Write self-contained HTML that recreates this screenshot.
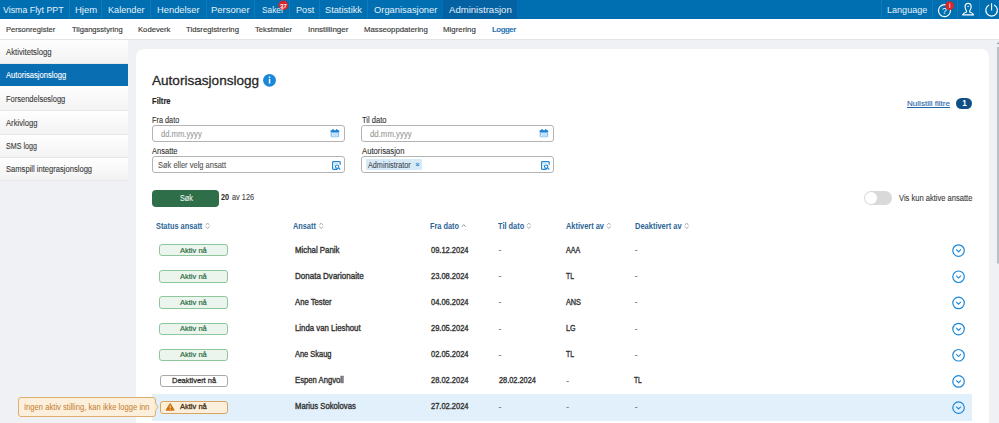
<!DOCTYPE html><html><head><meta charset="utf-8"><style>
html,body{margin:0;padding:0;width:999px;height:423px;overflow:hidden;background:#eff1f5;font-family:"Liberation Sans",sans-serif;}
.b{position:absolute;box-sizing:border-box;}
.t{position:absolute;white-space:nowrap;line-height:normal;}
svg{position:absolute;overflow:visible;}
</style></head><body>
<div class="b" style="left:0px;top:0px;width:999px;height:19px;background:#006fb1"></div>
<div class="b" style="left:443px;top:0px;width:74px;height:19px;background:#0462a2"></div>
<div class="b" style="left:69px;top:0px;width:1px;height:19px;background:#137ab9"></div>
<div class="b" style="left:101px;top:0px;width:1px;height:19px;background:#137ab9"></div>
<div class="b" style="left:150px;top:0px;width:1px;height:19px;background:#137ab9"></div>
<div class="b" style="left:206px;top:0px;width:1px;height:19px;background:#137ab9"></div>
<div class="b" style="left:254px;top:0px;width:1px;height:19px;background:#137ab9"></div>
<div class="b" style="left:289px;top:0px;width:1px;height:19px;background:#137ab9"></div>
<div class="b" style="left:319px;top:0px;width:1px;height:19px;background:#137ab9"></div>
<div class="b" style="left:367px;top:0px;width:1px;height:19px;background:#137ab9"></div>
<div class="b" style="left:881px;top:0px;width:1px;height:19px;background:#137ab9"></div>
<div class="b" style="left:932px;top:0px;width:1px;height:19px;background:#137ab9"></div>
<div class="b" style="left:956.5px;top:0px;width:1.0px;height:19px;background:#137ab9"></div>
<div class="b" style="left:978.5px;top:0px;width:1.0px;height:19px;background:#137ab9"></div>
<div class="b" style="left:0px;top:19px;width:999px;height:20px;background:#fff"></div>
<div class="b" style="left:0px;top:38.5px;width:999px;height:1.0px;background:#e2e4e7"></div>
<div class="b" style="left:0px;top:40px;width:128px;height:141px;background:#f6f6f6"></div>
<div class="b" style="left:0px;top:40px;width:128px;height:24px;background:linear-gradient(#fefefe,#f3f3f3);border-bottom:1px solid #e6e6e6"></div>
<div class="b" style="left:0px;top:64px;width:128px;height:22px;background:#0a6eb3"></div>
<div class="b" style="left:0px;top:86px;width:128px;height:25px;background:linear-gradient(#fefefe,#f3f3f3);border-bottom:1px solid #e6e6e6"></div>
<div class="b" style="left:0px;top:111px;width:128px;height:23.5px;background:linear-gradient(#fefefe,#f3f3f3);border-bottom:1px solid #e6e6e6"></div>
<div class="b" style="left:0px;top:134.5px;width:128px;height:23.5px;background:linear-gradient(#fefefe,#f3f3f3);border-bottom:1px solid #e6e6e6"></div>
<div class="b" style="left:0px;top:158px;width:128px;height:23px;background:linear-gradient(#fefefe,#f3f3f3);border-bottom:1px solid #e6e6e6"></div>
<div class="b" style="left:136px;top:49px;width:853px;height:391px;background:#fff;border-radius:8px"></div>
<div class="b" style="left:956px;top:98px;width:16px;height:11px;background:#0f4f86;border-radius:6px"></div>
<div class="b" style="left:152px;top:125px;width:192.5px;height:16.599999999999994px;border:1px solid #b3b3b3;border-radius:3px;background:#fff"></div>
<div class="b" style="left:361.3px;top:125px;width:192.40000000000003px;height:16.599999999999994px;border:1px solid #b3b3b3;border-radius:3px;background:#fff"></div>
<div class="b" style="left:152px;top:156.2px;width:192.5px;height:16.400000000000006px;border:1px solid #b3b3b3;border-radius:3px;background:#fff"></div>
<div class="b" style="left:361.3px;top:156.2px;width:192.40000000000003px;height:16.400000000000006px;border:1px solid #b3b3b3;border-radius:3px;background:#fff"></div>
<div class="b" style="left:365.5px;top:159.4px;width:56.30000000000001px;height:10.400000000000006px;background:#d6eaf8;border-radius:1px"></div>
<div class="b" style="left:152.4px;top:190px;width:66.6px;height:16.5px;background:#2e6e48;border-radius:4px"></div>
<div class="b" style="left:863.8px;top:191.2px;width:28.300000000000068px;height:13.600000000000023px;background:#d9d9d9;border-radius:7px"></div>
<div class="b" style="left:864.8px;top:192.2px;width:11.800000000000068px;height:11.600000000000023px;background:#fff;border-radius:50%"></div>
<div class="b" style="left:152.3px;top:394.2px;width:819.9000000000001px;height:26.600000000000023px;background:#e1f0fa"></div>
<div class="b" style="left:159.4px;top:244.0px;width:68.5px;height:12.399999999999977px;background:#ebf5ed;border:1px solid #8fc79c;border-radius:3px"></div>
<div class="b" style="left:159.4px;top:270.18px;width:68.5px;height:12.399999999999977px;background:#ebf5ed;border:1px solid #8fc79c;border-radius:3px"></div>
<div class="b" style="left:159.4px;top:296.36px;width:68.5px;height:12.399999999999977px;background:#ebf5ed;border:1px solid #8fc79c;border-radius:3px"></div>
<div class="b" style="left:159.4px;top:322.54px;width:68.5px;height:12.399999999999977px;background:#ebf5ed;border:1px solid #8fc79c;border-radius:3px"></div>
<div class="b" style="left:159.4px;top:348.71999999999997px;width:68.5px;height:12.399999999999977px;background:#ebf5ed;border:1px solid #8fc79c;border-radius:3px"></div>
<div class="b" style="left:159.5px;top:375.1px;width:68.1px;height:12.0px;background:#fff;border:1px solid #a9a9a9;border-radius:3px"></div>
<div class="b" style="left:159.5px;top:401.28px;width:68.1px;height:12.300000000000011px;background:#fcefdc;border:1px solid #d9a463;border-radius:3px"></div>
<div class="b" style="left:17.7px;top:397.2px;width:138.0px;height:19.600000000000023px;background:#fcf0dc;border:1px solid #deae6e;border-radius:3px"></div>
<svg style="left:0;top:0" width="999" height="423" viewBox="0 0 999 423">
<circle cx="944.5" cy="10.6" r="6.0" fill="none" stroke="#fff" stroke-width="1.15"/>
<text x="944.3" y="14" font-family="Liberation Sans" font-size="8.6" fill="#fff" text-anchor="middle">?</text>
<circle cx="949.6" cy="5.6" r="4.4" fill="#d9262c"/>
<rect x="949.3" y="3.4" width="0.9" height="4.6" fill="#f4d8e0"/>
<path d="M968.1,3.3 C966,3.3 964.9,4.8 965.1,7 C965.2,8.6 965.8,10 966.5,10.9 L966.5,11.9 C965,12.6 963,13.2 962.6,14.8 L973.6,14.8 C973.2,13.2 971.2,12.6 969.7,11.9 L969.7,10.9 C970.4,10 971,8.6 971.1,7 C971.3,4.8 970.2,3.3 968.1,3.3 Z" fill="none" stroke="#fff" stroke-width="1.15" stroke-linejoin="round"/>
<rect x="967.2" y="5.9" width="1.9" height="0.8" fill="#fff"/>
<path d="M989.15,5.04 A5.8,5.8 0 1 0 994.05,5.04" fill="none" stroke="#fff" stroke-width="1.15"/>
<line x1="991.6" y1="3.3" x2="991.6" y2="10.5" stroke="#fff" stroke-width="1.1"/>
<circle cx="283.3" cy="5.4" r="4.8" fill="#d9262c"/>
<text x="283.4" y="7.5" font-family="Liberation Sans" font-size="5.8" fill="#fff" stroke="#fff" stroke-width="0.15" text-anchor="middle" letter-spacing="-0.2">37</text>
<circle cx="269.5" cy="80.3" r="6.4" fill="#1a87d8"/>
<rect x="268.8" y="76.6" width="1.5" height="1.5" fill="#fff"/><rect x="268.8" y="79" width="1.5" height="4.6" fill="#fff"/>
<rect x="330.6" y="130.29999999999998" width="8.6" height="7" rx="1.2" fill="#8fc6ef"/>
<rect x="330.6" y="130.29999999999998" width="8.6" height="2" rx="0.8" fill="#1f80d2"/>
<rect x="332.40000000000003" y="129.1" width="1.4" height="2" rx="0.5" fill="#1f80d2"/><rect x="336.0" y="129.1" width="1.4" height="2" rx="0.5" fill="#1f80d2"/>
<rect x="332.0" y="132.9" width="5.8" height="3.6" fill="#d8ecfa"/>
<line x1="333.90000000000003" y1="132.9" x2="333.90000000000003" y2="136.5" stroke="#8fc6ef" stroke-width="0.6"/><line x1="335.90000000000003" y1="132.9" x2="335.90000000000003" y2="136.5" stroke="#8fc6ef" stroke-width="0.6"/>
<rect x="539.6" y="130.29999999999998" width="8.6" height="7" rx="1.2" fill="#8fc6ef"/>
<rect x="539.6" y="130.29999999999998" width="8.6" height="2" rx="0.8" fill="#1f80d2"/>
<rect x="541.4" y="129.1" width="1.4" height="2" rx="0.5" fill="#1f80d2"/><rect x="545.0" y="129.1" width="1.4" height="2" rx="0.5" fill="#1f80d2"/>
<rect x="541.0" y="132.9" width="5.8" height="3.6" fill="#d8ecfa"/>
<line x1="542.9" y1="132.9" x2="542.9" y2="136.5" stroke="#8fc6ef" stroke-width="0.6"/><line x1="544.9" y1="132.9" x2="544.9" y2="136.5" stroke="#8fc6ef" stroke-width="0.6"/>
<path d="M337.6,169.29999999999998 L333.4,169.29999999999998 Q332.6,169.29999999999998 332.6,168.5 L332.6,162.5 Q332.6,161.7 333.4,161.7 L339.4,161.7 Q340.2,161.7 340.2,162.5 L340.2,164.7" fill="none" stroke="#2186d6" stroke-width="1.2"/>
<rect x="334.0" y="163.29999999999998" width="3.5" height="0.8" fill="#a9d3f3"/><rect x="334.0" y="165.1" width="2.4" height="0.8" fill="#a9d3f3"/>
<circle cx="337.2" cy="166.7" r="1.7" fill="#fff" stroke="#2186d6" stroke-width="1.1"/>
<line x1="338.4" y1="167.9" x2="340.2" y2="169.5" stroke="#2186d6" stroke-width="1.1"/>
<path d="M546.6,169.29999999999998 L542.4,169.29999999999998 Q541.6,169.29999999999998 541.6,168.5 L541.6,162.5 Q541.6,161.7 542.4,161.7 L548.4,161.7 Q549.2,161.7 549.2,162.5 L549.2,164.7" fill="none" stroke="#2186d6" stroke-width="1.2"/>
<rect x="543.0" y="163.29999999999998" width="3.5" height="0.8" fill="#a9d3f3"/><rect x="543.0" y="165.1" width="2.4" height="0.8" fill="#a9d3f3"/>
<circle cx="546.2" cy="166.7" r="1.7" fill="#fff" stroke="#2186d6" stroke-width="1.1"/>
<line x1="547.4" y1="167.9" x2="549.2" y2="169.5" stroke="#2186d6" stroke-width="1.1"/>
<path d="M205.79999999999998,225.20000000000002 L207.6,223.0 L209.4,225.20000000000002 M205.79999999999998,226.4 L207.6,228.60000000000002 L209.4,226.4" fill="none" stroke="#9a9a9a" stroke-width="0.8"/>
<path d="M319.4,225.20000000000002 L321.2,223.0 L323.0,225.20000000000002 M319.4,226.4 L321.2,228.60000000000002 L323.0,226.4" fill="none" stroke="#9a9a9a" stroke-width="0.8"/>
<path d="M527.0,225.20000000000002 L528.8,223.0 L530.5999999999999,225.20000000000002 M527.0,226.4 L528.8,228.60000000000002 L530.5999999999999,226.4" fill="none" stroke="#9a9a9a" stroke-width="0.8"/>
<path d="M607.0,225.20000000000002 L608.8,223.0 L610.5999999999999,225.20000000000002 M607.0,226.4 L608.8,228.60000000000002 L610.5999999999999,226.4" fill="none" stroke="#9a9a9a" stroke-width="0.8"/>
<path d="M684.9000000000001,225.20000000000002 L686.7,223.0 L688.5,225.20000000000002 M684.9000000000001,226.4 L686.7,228.60000000000002 L688.5,226.4" fill="none" stroke="#9a9a9a" stroke-width="0.8"/>
<path d="M461.7,226.8 L463.7,224.6 L465.7,226.8" fill="none" stroke="#8a8a8a" stroke-width="0.9"/>
<circle cx="958.55" cy="250.55" r="5.75" fill="none" stroke="#1b88d9" stroke-width="1.2"/>
<path d="M956.2,249.45000000000002 L958.55,251.85000000000002 L960.9,249.45000000000002" fill="none" stroke="#1b88d9" stroke-width="1.1"/>
<circle cx="958.55" cy="276.73" r="5.75" fill="none" stroke="#1b88d9" stroke-width="1.2"/>
<path d="M956.2,275.63 L958.55,278.03000000000003 L960.9,275.63" fill="none" stroke="#1b88d9" stroke-width="1.1"/>
<circle cx="958.55" cy="302.91" r="5.75" fill="none" stroke="#1b88d9" stroke-width="1.2"/>
<path d="M956.2,301.81 L958.55,304.21000000000004 L960.9,301.81" fill="none" stroke="#1b88d9" stroke-width="1.1"/>
<circle cx="958.55" cy="329.09000000000003" r="5.75" fill="none" stroke="#1b88d9" stroke-width="1.2"/>
<path d="M956.2,327.99 L958.55,330.39000000000004 L960.9,327.99" fill="none" stroke="#1b88d9" stroke-width="1.1"/>
<circle cx="958.55" cy="355.27" r="5.75" fill="none" stroke="#1b88d9" stroke-width="1.2"/>
<path d="M956.2,354.16999999999996 L958.55,356.57 L960.9,354.16999999999996" fill="none" stroke="#1b88d9" stroke-width="1.1"/>
<circle cx="958.55" cy="381.45000000000005" r="5.75" fill="none" stroke="#1b88d9" stroke-width="1.2"/>
<path d="M956.2,380.35 L958.55,382.75000000000006 L960.9,380.35" fill="none" stroke="#1b88d9" stroke-width="1.1"/>
<circle cx="958.55" cy="407.63" r="5.75" fill="none" stroke="#1b88d9" stroke-width="1.2"/>
<path d="M956.2,406.53 L958.55,408.93 L960.9,406.53" fill="none" stroke="#1b88d9" stroke-width="1.1"/>
<path d="M170.15,404.1 L173.6,410 L166.7,410 Z" fill="#cf740c" stroke="#cf740c" stroke-width="1.7" stroke-linejoin="round"/>
<rect x="169.7" y="405.6" width="0.9" height="2.6" fill="#f8e3c8"/><rect x="169.7" y="408.8" width="0.9" height="0.8" fill="#f8e3c8"/>
<path d="M155.2,402.6 L158,407 L155.2,411.4 Z" fill="#fcf0dc" stroke="#deae6e" stroke-width="0.9" stroke-linejoin="round"/>
<rect x="154.2" y="403.4" width="1.5" height="7.2" fill="#fcf0dc"/>
<rect x="997" y="47" width="2" height="216.5" fill="#b9c0c8"/><rect x="997.2" y="42.6" width="1.8" height="1.6" fill="#9aa1a9"/>
</svg>
<span class="t" style="left:3.10px;top:4px;font-size:9.88px;transform:scaleX(0.8922);transform-origin:0.00px 0;-webkit-text-stroke:0.1px currentColor;color:#e6f1f9;-webkit-text-stroke:0;">Visma Flyt PPT</span>
<span class="t" style="left:74.90px;top:4px;font-size:9.88px;transform:scaleX(0.9623);transform-origin:0.00px 0;-webkit-text-stroke:0.1px currentColor;color:#e6f1f9;-webkit-text-stroke:0;">Hjem</span>
<span class="t" style="left:108.40px;top:4px;font-size:9.88px;transform:scaleX(0.9251);transform-origin:0.00px 0;-webkit-text-stroke:0.1px currentColor;color:#e6f1f9;-webkit-text-stroke:0;">Kalender</span>
<span class="t" style="left:156.80px;top:4px;font-size:9.88px;transform:scaleX(0.9456);transform-origin:0.00px 0;-webkit-text-stroke:0.1px currentColor;color:#e6f1f9;-webkit-text-stroke:0;">Hendelser</span>
<span class="t" style="left:211.00px;top:4px;font-size:9.88px;transform:scaleX(0.9624);transform-origin:0.00px 0;-webkit-text-stroke:0.1px currentColor;color:#e6f1f9;-webkit-text-stroke:0;">Personer</span>
<span class="t" style="left:261.50px;top:4px;font-size:9.88px;transform:scaleX(0.8406);transform-origin:0.00px 0;-webkit-text-stroke:0.1px currentColor;color:#e6f1f9;-webkit-text-stroke:0;">Saker</span>
<span class="t" style="left:295.50px;top:4px;font-size:9.88px;transform:scaleX(0.9253);transform-origin:0.00px 0;-webkit-text-stroke:0.1px currentColor;color:#e6f1f9;-webkit-text-stroke:0;">Post</span>
<span class="t" style="left:325.20px;top:4px;font-size:9.88px;transform:scaleX(0.9352);transform-origin:0.00px 0;-webkit-text-stroke:0.1px currentColor;color:#e6f1f9;-webkit-text-stroke:0;">Statistikk</span>
<span class="t" style="left:373.60px;top:4px;font-size:9.88px;transform:scaleX(0.9460);transform-origin:0.00px 0;-webkit-text-stroke:0.1px currentColor;color:#e6f1f9;-webkit-text-stroke:0;">Organisasjoner</span>
<span class="t" style="left:448.60px;top:4px;font-size:9.88px;transform:scaleX(0.9689);transform-origin:0.00px 0;-webkit-text-stroke:0.1px currentColor;color:#e6f1f9;-webkit-text-stroke:0;">Administrasjon</span>
<span class="t" style="left:886.50px;top:4px;font-size:9.88px;transform:scaleX(0.9165);transform-origin:0.00px 0;-webkit-text-stroke:0.1px currentColor;color:#e6f1f9;-webkit-text-stroke:0;">Language</span>
<span class="t" style="left:5.80px;top:25px;font-size:7.99px;transform:scaleX(0.9503);transform-origin:0.00px 0;-webkit-text-stroke:0.1px currentColor;color:#3a3a3a;-webkit-text-stroke:0.15px #3a3a3a;">Personregister</span>
<span class="t" style="left:71.60px;top:25px;font-size:7.99px;transform:scaleX(0.9483);transform-origin:0.00px 0;-webkit-text-stroke:0.1px currentColor;color:#3a3a3a;-webkit-text-stroke:0.15px #3a3a3a;">Tilgangsstyring</span>
<span class="t" style="left:138.00px;top:25px;font-size:7.99px;transform:scaleX(0.9618);transform-origin:0.00px 0;-webkit-text-stroke:0.1px currentColor;color:#3a3a3a;-webkit-text-stroke:0.15px #3a3a3a;">Kodeverk</span>
<span class="t" style="left:186.00px;top:25px;font-size:7.99px;transform:scaleX(0.9673);transform-origin:0.00px 0;-webkit-text-stroke:0.1px currentColor;color:#3a3a3a;-webkit-text-stroke:0.15px #3a3a3a;">Tidsregistrering</span>
<span class="t" style="left:255.10px;top:25px;font-size:7.99px;transform:scaleX(0.9598);transform-origin:0.00px 0;-webkit-text-stroke:0.1px currentColor;color:#3a3a3a;-webkit-text-stroke:0.15px #3a3a3a;">Tekstmaler</span>
<span class="t" style="left:307.60px;top:25px;font-size:7.99px;transform:scaleX(0.9991);transform-origin:0.00px 0;-webkit-text-stroke:0.1px currentColor;color:#3a3a3a;-webkit-text-stroke:0.15px #3a3a3a;">Innstillinger</span>
<span class="t" style="left:364.00px;top:25px;font-size:7.99px;transform:scaleX(0.9700);transform-origin:0.00px 0;-webkit-text-stroke:0.1px currentColor;color:#3a3a3a;-webkit-text-stroke:0.15px #3a3a3a;">Masseoppdatering</span>
<span class="t" style="left:443.20px;top:25px;font-size:7.99px;transform:scaleX(0.9844);transform-origin:0.00px 0;-webkit-text-stroke:0.1px currentColor;color:#3a3a3a;-webkit-text-stroke:0.15px #3a3a3a;">Migrering</span>
<span class="t" style="left:492.00px;top:25px;font-size:7.99px;letter-spacing:-0.558px;font-weight:bold;color:#1f72b5;">Logger</span>
<span class="t" style="left:5.70px;top:48px;font-size:8.28px;transform:scaleX(0.9362);transform-origin:0.00px 0;-webkit-text-stroke:0.1px currentColor;color:#3a3a3a;">Aktivitetslogg</span>
<span class="t" style="left:5.90px;top:71px;font-size:8.28px;transform:scaleX(0.9220);transform-origin:0.00px 0;-webkit-text-stroke:0.1px currentColor;color:#ffffff;">Autorisasjonslogg</span>
<span class="t" style="left:5.80px;top:95px;font-size:8.28px;transform:scaleX(0.9082);transform-origin:0.00px 0;-webkit-text-stroke:0.1px currentColor;color:#3a3a3a;">Forsendelseslogg</span>
<span class="t" style="left:5.70px;top:119px;font-size:8.28px;transform:scaleX(0.9244);transform-origin:0.00px 0;-webkit-text-stroke:0.1px currentColor;color:#3a3a3a;">Arkivlogg</span>
<span class="t" style="left:5.70px;top:142px;font-size:8.28px;transform:scaleX(0.8659);transform-origin:0.00px 0;-webkit-text-stroke:0.1px currentColor;color:#3a3a3a;">SMS logg</span>
<span class="t" style="left:5.70px;top:165px;font-size:8.28px;transform:scaleX(0.9186);transform-origin:0.00px 0;-webkit-text-stroke:0.1px currentColor;color:#3a3a3a;">Samspill integrasjonslogg</span>
<span class="t" style="left:152.40px;top:73px;font-size:13.66px;transform:scaleX(0.9939);transform-origin:0.00px 0;-webkit-text-stroke:0.1px currentColor;color:#252525;-webkit-text-stroke:0.3px #252525;">Autorisasjonslogg</span>
<span class="t" style="left:152.40px;top:97px;font-size:8.14px;transform:scaleX(0.9346);transform-origin:0.00px 0;font-weight:bold;color:#252525;-webkit-text-stroke:0.15px #252525;">Filtre</span>
<span class="t" style="left:906.50px;top:99px;font-size:7.85px;transform:scaleX(1.0271);transform-origin:0.00px 0;-webkit-text-stroke:0.1px currentColor;color:#1f66a8;text-decoration:underline;">Nullstill filtre</span>
<span class="t" style="left:962.30px;top:99px;font-size:8.14px;font-weight:bold;color:#fff;">1</span>
<span class="t" style="left:152.40px;top:116px;font-size:8.14px;transform:scaleX(0.9006);transform-origin:0.00px 0;-webkit-text-stroke:0.1px currentColor;color:#333;">Fra dato</span>
<span class="t" style="left:361.90px;top:116px;font-size:8.14px;transform:scaleX(0.9322);transform-origin:0.00px 0;-webkit-text-stroke:0.1px currentColor;color:#333;">Til dato</span>
<span class="t" style="left:152.40px;top:147px;font-size:8.14px;transform:scaleX(0.9275);transform-origin:0.00px 0;-webkit-text-stroke:0.1px currentColor;color:#333;">Ansatte</span>
<span class="t" style="left:361.90px;top:147px;font-size:8.14px;transform:scaleX(0.9488);transform-origin:0.00px 0;-webkit-text-stroke:0.1px currentColor;color:#333;">Autorisasjon</span>
<span class="t" style="left:161.40px;top:130px;font-size:8.14px;transform:scaleX(0.9397);transform-origin:0.00px 0;-webkit-text-stroke:0.1px currentColor;color:#999;">dd.mm.yyyy</span>
<span class="t" style="left:370.00px;top:130px;font-size:8.14px;transform:scaleX(0.9628);transform-origin:0.00px 0;-webkit-text-stroke:0.1px currentColor;color:#999;">dd.mm.yyyy</span>
<span class="t" style="left:158.00px;top:160px;font-size:8.58px;transform:scaleX(0.8752);transform-origin:0.00px 0;-webkit-text-stroke:0.1px currentColor;color:#555;">Søk eller velg ansatt</span>
<span class="t" style="left:368.00px;top:161px;font-size:8.14px;transform:scaleX(0.8905);transform-origin:0.00px 0;-webkit-text-stroke:0.1px currentColor;color:#454b52;-webkit-text-stroke:0.1px;">Administrator</span>
<span class="t" style="left:415.30px;top:160px;font-size:7.56px;-webkit-text-stroke:0.1px currentColor;color:#1f7cc8;-webkit-text-stroke:0.2px #1f7cc8;">×</span>
<span class="t" style="left:179.50px;top:193px;font-size:8.58px;transform:scaleX(0.8516);transform-origin:0.00px 0;-webkit-text-stroke:0.1px currentColor;color:#eef5f0;">Søk</span>
<span class="t" style="left:221.40px;top:192px;font-size:8.43px;transform:scaleX(0.8641);transform-origin:0.00px 0;font-weight:bold;color:#2a2a2a;">20</span>
<span class="t" style="left:231.60px;top:192px;font-size:8.43px;transform:scaleX(0.8733);transform-origin:0.00px 0;-webkit-text-stroke:0.1px currentColor;color:#444;">av 126</span>
<span class="t" style="left:898.60px;top:193px;font-size:8.43px;transform:scaleX(0.8979);transform-origin:0.00px 0;-webkit-text-stroke:0.1px currentColor;color:#3a3a3a;">Vis kun aktive ansatte</span>
<span class="t" style="left:156.00px;top:222px;font-size:8.28px;transform:scaleX(0.8920);transform-origin:0.00px 0;font-weight:bold;color:#2a6596;">Status ansatt</span>
<span class="t" style="left:205.90px;top:223px;font-size:6.54px;-webkit-text-stroke:0.1px currentColor;color:#888;display:none;">⇳</span>
<span class="t" style="left:292.80px;top:222px;font-size:8.28px;transform:scaleX(0.8885);transform-origin:0.00px 0;font-weight:bold;color:#2a6596;">Ansatt</span>
<span class="t" style="left:319.50px;top:223px;font-size:6.54px;-webkit-text-stroke:0.1px currentColor;color:#888;display:none;">⇳</span>
<span class="t" style="left:497.70px;top:222px;font-size:8.28px;transform:scaleX(0.8975);transform-origin:0.00px 0;font-weight:bold;color:#2a6596;">Til dato</span>
<span class="t" style="left:527.30px;top:223px;font-size:6.54px;-webkit-text-stroke:0.1px currentColor;color:#888;display:none;">⇳</span>
<span class="t" style="left:566.00px;top:222px;font-size:8.28px;transform:scaleX(0.8969);transform-origin:0.00px 0;font-weight:bold;color:#2a6596;">Aktivert av</span>
<span class="t" style="left:607.30px;top:223px;font-size:6.54px;-webkit-text-stroke:0.1px currentColor;color:#888;display:none;">⇳</span>
<span class="t" style="left:634.50px;top:222px;font-size:8.28px;transform:scaleX(0.9054);transform-origin:0.00px 0;font-weight:bold;color:#2a6596;">Deaktivert av</span>
<span class="t" style="left:685.20px;top:223px;font-size:6.54px;-webkit-text-stroke:0.1px currentColor;color:#888;display:none;">⇳</span>
<span class="t" style="left:429.50px;top:222px;font-size:8.28px;transform:scaleX(0.8903);transform-origin:0.00px 0;font-weight:bold;color:#2a6596;">Fra dato</span>
<span class="t" style="left:180.20px;top:246px;font-size:7.70px;transform:scaleX(0.9778);transform-origin:0.00px 0;-webkit-text-stroke:0.1px currentColor;color:#2d6e44;-webkit-text-stroke:0.2px #2d6e44;">Aktiv nå</span>
<span class="t" style="left:295.40px;top:246px;font-size:8.28px;transform:scaleX(0.9493);transform-origin:0.00px 0;-webkit-text-stroke:0.1px currentColor;color:#333;-webkit-text-stroke:0.35px #333;">Michal Panik</span>
<span class="t" style="left:430.60px;top:246px;font-size:8.28px;transform:scaleX(0.9068);transform-origin:0.00px 0;-webkit-text-stroke:0.1px currentColor;color:#333;-webkit-text-stroke:0.35px #333;">09.12.2024</span>
<span class="t" style="left:498.60px;top:246px;font-size:8.28px;-webkit-text-stroke:0.1px currentColor;color:#777;">-</span>
<span class="t" style="left:566.00px;top:246px;font-size:8.28px;transform:scaleX(0.8626);transform-origin:0.00px 0;-webkit-text-stroke:0.1px currentColor;color:#333;-webkit-text-stroke:0.35px #333;">AAA</span>
<span class="t" style="left:634.70px;top:246px;font-size:8.28px;-webkit-text-stroke:0.1px currentColor;color:#777;">-</span>
<span class="t" style="left:180.20px;top:272px;font-size:7.70px;transform:scaleX(0.9778);transform-origin:0.00px 0;-webkit-text-stroke:0.1px currentColor;color:#2d6e44;-webkit-text-stroke:0.2px #2d6e44;">Aktiv nå</span>
<span class="t" style="left:295.40px;top:272px;font-size:8.28px;transform:scaleX(0.9700);transform-origin:0.00px 0;-webkit-text-stroke:0.1px currentColor;color:#333;-webkit-text-stroke:0.35px #333;">Donata Dvarionaite</span>
<span class="t" style="left:430.60px;top:272px;font-size:8.28px;transform:scaleX(0.9068);transform-origin:0.00px 0;-webkit-text-stroke:0.1px currentColor;color:#333;-webkit-text-stroke:0.35px #333;">23.08.2024</span>
<span class="t" style="left:498.60px;top:272px;font-size:8.28px;-webkit-text-stroke:0.1px currentColor;color:#777;">-</span>
<span class="t" style="left:566.00px;top:272px;font-size:8.28px;transform:scaleX(0.8274);transform-origin:0.00px 0;-webkit-text-stroke:0.1px currentColor;color:#333;-webkit-text-stroke:0.35px #333;">TL</span>
<span class="t" style="left:634.70px;top:272px;font-size:8.28px;-webkit-text-stroke:0.1px currentColor;color:#777;">-</span>
<span class="t" style="left:180.20px;top:298px;font-size:7.70px;transform:scaleX(0.9778);transform-origin:0.00px 0;-webkit-text-stroke:0.1px currentColor;color:#2d6e44;-webkit-text-stroke:0.2px #2d6e44;">Aktiv nå</span>
<span class="t" style="left:295.40px;top:298px;font-size:8.28px;transform:scaleX(0.9302);transform-origin:0.00px 0;-webkit-text-stroke:0.1px currentColor;color:#333;-webkit-text-stroke:0.35px #333;">Ane Tester</span>
<span class="t" style="left:430.60px;top:298px;font-size:8.28px;transform:scaleX(0.9068);transform-origin:0.00px 0;-webkit-text-stroke:0.1px currentColor;color:#333;-webkit-text-stroke:0.35px #333;">04.06.2024</span>
<span class="t" style="left:498.60px;top:298px;font-size:8.28px;-webkit-text-stroke:0.1px currentColor;color:#777;">-</span>
<span class="t" style="left:566.00px;top:298px;font-size:8.28px;transform:scaleX(0.8806);transform-origin:0.00px 0;-webkit-text-stroke:0.1px currentColor;color:#333;-webkit-text-stroke:0.35px #333;">ANS</span>
<span class="t" style="left:634.70px;top:298px;font-size:8.28px;-webkit-text-stroke:0.1px currentColor;color:#777;">-</span>
<span class="t" style="left:180.20px;top:324px;font-size:7.70px;transform:scaleX(0.9778);transform-origin:0.00px 0;-webkit-text-stroke:0.1px currentColor;color:#2d6e44;-webkit-text-stroke:0.2px #2d6e44;">Aktiv nå</span>
<span class="t" style="left:295.40px;top:324px;font-size:8.28px;transform:scaleX(0.9459);transform-origin:0.00px 0;-webkit-text-stroke:0.1px currentColor;color:#333;-webkit-text-stroke:0.35px #333;">Linda van Lieshout</span>
<span class="t" style="left:430.60px;top:324px;font-size:8.28px;transform:scaleX(0.9068);transform-origin:0.00px 0;-webkit-text-stroke:0.1px currentColor;color:#333;-webkit-text-stroke:0.35px #333;">29.05.2024</span>
<span class="t" style="left:498.60px;top:325px;font-size:8.28px;-webkit-text-stroke:0.1px currentColor;color:#777;">-</span>
<span class="t" style="left:566.00px;top:324px;font-size:8.28px;transform:scaleX(0.8596);transform-origin:0.00px 0;-webkit-text-stroke:0.1px currentColor;color:#333;-webkit-text-stroke:0.35px #333;">LG</span>
<span class="t" style="left:634.70px;top:325px;font-size:8.28px;-webkit-text-stroke:0.1px currentColor;color:#777;">-</span>
<span class="t" style="left:180.20px;top:350px;font-size:7.70px;transform:scaleX(0.9778);transform-origin:0.00px 0;-webkit-text-stroke:0.1px currentColor;color:#2d6e44;-webkit-text-stroke:0.2px #2d6e44;">Aktiv nå</span>
<span class="t" style="left:295.40px;top:350px;font-size:8.28px;transform:scaleX(0.9004);transform-origin:0.00px 0;-webkit-text-stroke:0.1px currentColor;color:#333;-webkit-text-stroke:0.35px #333;">Ane Skaug</span>
<span class="t" style="left:430.60px;top:350px;font-size:8.28px;transform:scaleX(0.9068);transform-origin:0.00px 0;-webkit-text-stroke:0.1px currentColor;color:#333;-webkit-text-stroke:0.35px #333;">02.05.2024</span>
<span class="t" style="left:498.60px;top:351px;font-size:8.28px;-webkit-text-stroke:0.1px currentColor;color:#777;">-</span>
<span class="t" style="left:566.00px;top:350px;font-size:8.28px;transform:scaleX(0.8274);transform-origin:0.00px 0;-webkit-text-stroke:0.1px currentColor;color:#333;-webkit-text-stroke:0.35px #333;">TL</span>
<span class="t" style="left:634.70px;top:351px;font-size:8.28px;-webkit-text-stroke:0.1px currentColor;color:#777;">-</span>
<span class="t" style="left:171.50px;top:376px;font-size:7.70px;transform:scaleX(0.9738);transform-origin:0.00px 0;-webkit-text-stroke:0.1px currentColor;color:#333;-webkit-text-stroke:0.3px #333;">Deaktivert nå</span>
<span class="t" style="left:295.40px;top:376px;font-size:8.28px;transform:scaleX(0.9313);transform-origin:0.00px 0;-webkit-text-stroke:0.1px currentColor;color:#333;-webkit-text-stroke:0.35px #333;">Espen Angvoll</span>
<span class="t" style="left:430.60px;top:376px;font-size:8.28px;transform:scaleX(0.9068);transform-origin:0.00px 0;-webkit-text-stroke:0.1px currentColor;color:#333;-webkit-text-stroke:0.35px #333;">28.02.2024</span>
<span class="t" style="left:498.50px;top:376px;font-size:8.28px;transform:scaleX(0.8923);transform-origin:0.00px 0;-webkit-text-stroke:0.1px currentColor;color:#333;-webkit-text-stroke:0.35px #333;">28.02.2024</span>
<span class="t" style="left:566.30px;top:377px;font-size:8.28px;-webkit-text-stroke:0.1px currentColor;color:#777;">-</span>
<span class="t" style="left:633.60px;top:376px;font-size:8.28px;transform:scaleX(0.8067);transform-origin:0.00px 0;-webkit-text-stroke:0.1px currentColor;color:#333;-webkit-text-stroke:0.35px #333;">TL</span>
<span class="t" style="left:180.20px;top:402px;font-size:7.70px;transform:scaleX(0.9778);transform-origin:0.00px 0;-webkit-text-stroke:0.1px currentColor;color:#4a3215;-webkit-text-stroke:0.3px #4a3215;">Aktiv nå</span>
<span class="t" style="left:295.40px;top:402px;font-size:8.28px;transform:scaleX(0.9329);transform-origin:0.00px 0;-webkit-text-stroke:0.1px currentColor;color:#333;-webkit-text-stroke:0.35px #333;">Marius Sokolovas</span>
<span class="t" style="left:430.60px;top:402px;font-size:8.28px;transform:scaleX(0.9068);transform-origin:0.00px 0;-webkit-text-stroke:0.1px currentColor;color:#333;-webkit-text-stroke:0.35px #333;">27.02.2024</span>
<span class="t" style="left:498.60px;top:403px;font-size:8.28px;-webkit-text-stroke:0.1px currentColor;color:#777;">-</span>
<span class="t" style="left:566.30px;top:403px;font-size:8.28px;-webkit-text-stroke:0.1px currentColor;color:#777;">-</span>
<span class="t" style="left:634.70px;top:403px;font-size:8.28px;-webkit-text-stroke:0.1px currentColor;color:#777;">-</span>
<span class="t" style="left:23.60px;top:402px;font-size:8.43px;transform:scaleX(0.9062);transform-origin:0.00px 0;-webkit-text-stroke:0.1px currentColor;color:#c47d2e;-webkit-text-stroke:0;">Ingen aktiv stilling, kan ikke logge inn</span>
</body></html>
